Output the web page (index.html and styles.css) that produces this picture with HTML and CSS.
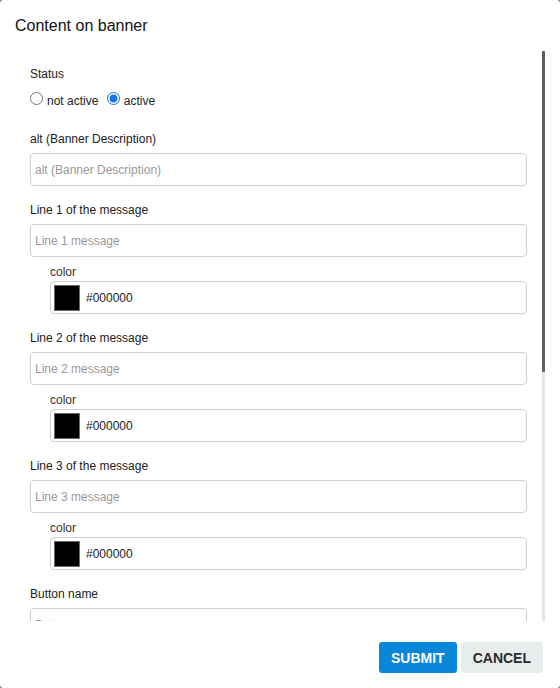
FILE: index.html
```html
<!DOCTYPE html>
<html lang="en">
<head>
<meta charset="utf-8">
<title>Content on banner</title>
<link rel="stylesheet" href="styles.css">
</head>
<body>
<div class="dialog">
  <div class="dialog-header">
    <h2 class="dialog-title">Content on banner</h2>
  </div>
  <div class="dialog-main">
    <div class="dialog-body">
      <div class="field field-status">
        <div class="label status-label">Status</div>
        <div class="radios">
          <label class="radio"><input type="radio" name="status" value="0">not active</label>
          <label class="radio"><input type="radio" name="status" value="1" checked>active</label>
        </div>
      </div>

      <div class="field">
        <div class="label">alt (Banner Description)</div>
        <input class="text-input" type="text" placeholder="alt (Banner Description)">
      </div>

      <div class="field">
        <div class="label">Line 1 of the message</div>
        <input class="text-input" type="text" placeholder="Line 1 message">
        <div class="sub-field">
          <div class="sub-label">color</div>
          <div class="color-input"><span class="swatch"></span><span class="color-value">#000000</span></div>
        </div>
      </div>

      <div class="field">
        <div class="label">Line 2 of the message</div>
        <input class="text-input" type="text" placeholder="Line 2 message">
        <div class="sub-field">
          <div class="sub-label">color</div>
          <div class="color-input"><span class="swatch"></span><span class="color-value">#000000</span></div>
        </div>
      </div>

      <div class="field">
        <div class="label">Line 3 of the message</div>
        <input class="text-input" type="text" placeholder="Line 3 message">
        <div class="sub-field">
          <div class="sub-label">color</div>
          <div class="color-input"><span class="swatch"></span><span class="color-value">#000000</span></div>
        </div>
      </div>

      <div class="field">
        <div class="label">Button name</div>
        <input class="text-input" type="text" placeholder="Button name">
      </div>
    </div>
    <div class="scrollbar" aria-hidden="true">
      <div class="scrollbar-thumb"></div>
      <div class="scrollbar-track"></div>
    </div>
  </div>
  <div class="dialog-footer">
    <button class="btn btn-primary" type="button">SUBMIT</button>
    <button class="btn btn-secondary" type="button">CANCEL</button>
  </div>
</div>
</body>
</html>
```

FILE: styles.css
```css
html {
  background: #8a8a8a;
}

body {
  margin: 0;
  font-family: "Liberation Sans", Arial, Helvetica, sans-serif;
  color: #222;
}

.dialog {
  width: 560px;
  height: 688px;
  background: #fff;
  border-radius: 4px;
  display: flex;
  flex-direction: column;
  overflow: hidden;
}

.dialog-header {
  padding: 16px 15px 16px 15px;
  flex: none;
}

.dialog-title {
  margin: 0;
  font-size: 16px;
  line-height: 19px;
  font-weight: normal;
  color: #111;
}

.dialog-main {
  flex: none;
  height: 570px;
  width: 530px;
  margin-left: 15px;
  display: flex;
}

.dialog-body {
  flex: 1;
  min-width: 0;
  box-sizing: border-box;
  padding: 16px 15px 0 15px;
  overflow: hidden;
}

.scrollbar {
  flex: none;
  width: 3px;
  display: flex;
  flex-direction: column;
}

.scrollbar-thumb {
  height: 321px;
  background: #5e5e5e;
  border-radius: 1px;
}

.scrollbar-track {
  flex: 1;
  background: #e6e6e6;
}

.field {
  margin-bottom: 16px;
}

.field-status {
  margin-bottom: 23px;
}

.label {
  font-size: 12px;
  line-height: 14px;
  padding-top: 1px;
  margin-bottom: 7px;
  color: #222;
}

.status-label {
  padding-top: 0;
  margin-bottom: 11px;
}

.radios {
  font-size: 12px;
  line-height: 14px;
  color: #222;
}

.radio input {
  width: 13px;
  height: 13px;
  margin: 0 4px 0 0;
  accent-color: #1a73e8;
}

.radio + .radio input {
  margin-left: 5px;
}

.text-input {
  display: block;
  width: 100%;
  height: 33px;
  box-sizing: border-box;
  border: 1px solid #cfcfcf;
  border-radius: 4px;
  padding: 0 4px;
  font-family: inherit;
  font-size: 12px;
  color: #222;
  background: #fff;
  outline: none;
}

.text-input::placeholder {
  color: #999;
}

.sub-field {
  padding-left: 20px;
  margin-top: 8px;
}

.sub-label {
  font-size: 12px;
  line-height: 14px;
  margin-bottom: 2px;
  color: #333;
}

.color-input {
  height: 33px;
  box-sizing: border-box;
  border: 1px solid #cfcfcf;
  border-radius: 4px;
  padding: 0 3px;
  display: flex;
  align-items: center;
  gap: 6px;
}

.swatch {
  width: 26px;
  height: 26px;
  box-sizing: border-box;
  background: #000;
  border: 1px solid #6b6b6b;
}

.color-value {
  font-size: 12px;
  color: #222;
}

.dialog-footer {
  flex: none;
  display: flex;
  justify-content: flex-end;
  gap: 4px;
  padding: 21px 17px 15px 15px;
}

.btn {
  height: 31px;
  padding: 0 12px;
  border: none;
  border-radius: 3px;
  font-family: inherit;
  font-size: 14px;
  font-weight: bold;
  cursor: pointer;
}

.btn-primary {
  background: #0a86d8;
  color: #fff;
}

.btn-secondary {
  background: #e8eced;
  color: #2a2a2a;
}
```
